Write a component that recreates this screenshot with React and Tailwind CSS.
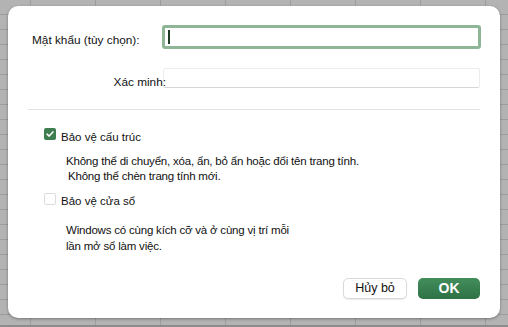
export default function App() {
  return (
    <div className="w-[508px] h-[327px] overflow-hidden bg-[#b3b3b3] bg-[linear-gradient(to_right,#9d9d9d_1px,transparent_1px),linear-gradient(to_bottom,#9d9d9d_1px,transparent_1px)] bg-[size:65px_15px] bg-[position:30px_14px] border-b-2 border-[#8c8c8c] pt-[6px] pl-[8px] font-['Liberation_Sans',Arial,sans-serif] text-[11.5px] text-[#111]">
      <div className="w-[492px] h-[312px] bg-white rounded-[10px] shadow-[0_1px_3px_rgba(0,0,0,0.35)] flex flex-col">
        <div className="flex items-center h-[24px] mt-[19px]">
          <div className="w-[154px] pl-[24px] text-[11.8px] pt-[8px]">Mật khẩu (tùy chọn):</div>
          <div className="w-[319px] h-[24px] border-[3px] border-[#8fb597] rounded-[3px] flex items-center pl-[3px]">
            <div className="w-[2px] h-[14px] bg-[#1d3b24]" />
          </div>
        </div>
        <div className="flex items-center h-[20px] mt-[19px]">
          <div className="relative z-10 w-[158px] text-right text-[11.8px] pt-[9px]">Xác minh:</div>
          <div className="w-[317px] -ml-[3px] h-[20px] border border-[#ececec] border-b-[#d6d6d6] rounded-[2px]" />
        </div>
        <div className="ml-[20px] w-[452px] h-px bg-[#e3e3e3] mt-[21px]" />
        <div className="flex items-center mt-[18px] pl-[36px] h-[12px]">
          <div className="w-[12px] h-[12px] rounded-[2px] bg-[#3d7d4f] flex items-center justify-center">
            <svg viewBox="0 0 12 12" className="w-[10px] h-[10px]">
              <path d="M2.5 6.2 L5 8.5 L9.5 3.5" fill="none" stroke="white" strokeWidth="1.8" strokeLinecap="round" strokeLinejoin="round" />
            </svg>
          </div>
          <span className="ml-[5px] mt-[7px]">Bảo vệ cấu trúc</span>
        </div>
        <div className="pl-[58px] mt-[14px] leading-[15px] tracking-[-0.2px]">
          <div>Không thể di chuyển, xóa, ẩn, bỏ ẩn hoặc đổi tên trang tính.</div>
          <div className="pl-[2px]">Không thể chèn trang tính mới.</div>
        </div>
        <div className="flex items-center mt-[9px] pl-[36px] h-[12px]">
          <div className="w-[12px] h-[12px] rounded-[2px] border border-[#dcdcdc] bg-white" />
          <span className="ml-[5px] mt-[5px]">Bảo vệ cửa sổ</span>
        </div>
        <div className="pl-[58px] mt-[17px] leading-[16px] tracking-[-0.2px]">
          <div>Windows có cùng kích cỡ và ở cùng vị trí mỗi</div>
          <div>lần mở sổ làm việc.</div>
        </div>
        <div className="mt-auto mb-[19px] mr-[20px] flex justify-end gap-[11px]">
          <button className="w-[64px] h-[21px] rounded-[5px] bg-white border border-[#dadada] shadow-[0_1px_1px_rgba(0,0,0,0.08)] text-[12.5px] text-[#111]">
            Hủy bỏ
          </button>
          <button className="w-[62px] h-[21px] rounded-[5px] bg-[linear-gradient(to_bottom,#438d5b,#2e7245)] text-white text-[14px] font-semibold">
            OK
          </button>
        </div>
      </div>
    </div>
  )
}
